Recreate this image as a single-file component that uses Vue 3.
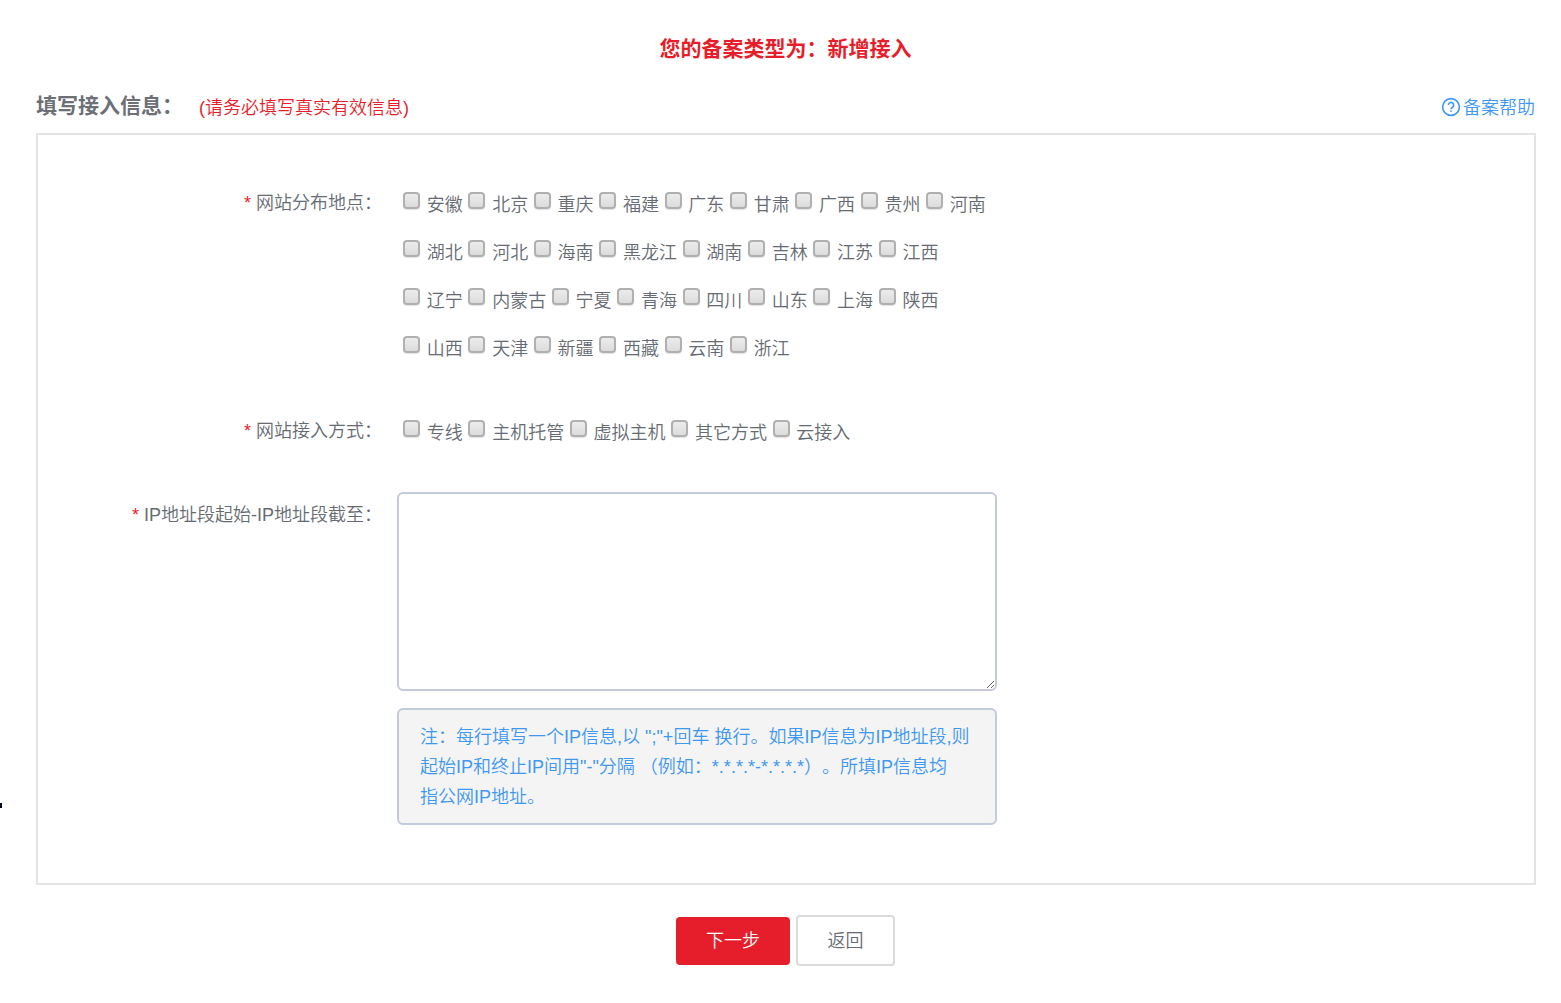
<script setup>
import { ref } from 'vue'

const provinces = [
  '安徽', '北京', '重庆', '福建', '广东', '甘肃', '广西', '贵州', '河南',
  '湖北', '河北', '海南', '黑龙江', '湖南', '吉林', '江苏', '江西',
  '辽宁', '内蒙古', '宁夏', '青海', '四川', '山东', '上海', '陕西',
  '山西', '天津', '新疆', '西藏', '云南', '浙江',
]
const accessModes = ['专线', '主机托管', '虚拟主机', '其它方式', '云接入']

const selectedProvinces = ref([])
const selectedModes = ref([])
const ipRanges = ref('')
</script>

<template>
  <main class="page">
    <span class="edge-mark" aria-hidden="true"></span>
    <h1 class="record-type">您的备案类型为：新增接入</h1>

    <header class="head">
      <h2 class="head-title">填写接入信息：</h2>
      <span class="head-tip">(请务必填写真实有效信息)</span>
      <a class="help" href="#">
        <svg class="help-icon" viewBox="0 0 20 20" aria-hidden="true">
          <circle cx="10" cy="11" r="8.4" />
          <path d="M7.4 9.1a2.6 2.6 0 1 1 4.2 2c-.9.7-1.6 1.1-1.6 2.1" />
          <path d="M10 14.6v1.5" />
        </svg>
        <span>备案帮助</span>
      </a>
    </header>

    <form id="access-form" class="panel" @submit.prevent>
      <div class="field" role="group" aria-labelledby="label-province">
        <div id="label-province" class="field-label"><span class="star">*</span> 网站分布地点：</div>
        <div class="field-body options">
          <template v-for="name in provinces" :key="name">
            <label class="option"><input v-model="selectedProvinces" type="checkbox" :value="name"> {{ name }}</label>{{ ' ' }}
          </template>
        </div>
      </div>

      <div class="field" role="group" aria-labelledby="label-mode">
        <div id="label-mode" class="field-label"><span class="star">*</span> 网站接入方式：</div>
        <div class="field-body options">
          <template v-for="name in accessModes" :key="name">
            <label class="option"><input v-model="selectedModes" type="checkbox" :value="name"> {{ name }}</label>{{ ' ' }}
          </template>
        </div>
      </div>

      <div class="field">
        <label class="field-label" for="ip-ranges"><span class="star">*</span> IP地址段起始-IP地址段截至：</label>
        <div class="field-body">
          <textarea id="ip-ranges" v-model="ipRanges" class="ip-input"></textarea>
          <p class="note">注：每行填写一个IP信息,以 ";"+回车 换行。如果IP信息为IP地址段,则起始IP和终止IP间用"-"分隔 （例如：*.*.*.*-*.*.*.*）。所填IP信息均<span class="keep">指公网IP地址。</span></p>
        </div>
      </div>
    </form>

    <div class="actions">
      <button class="btn btn-primary" type="submit" form="access-form">下一步</button>
      <button class="btn btn-plain" type="button">返回</button>
    </div>
  </main>
</template>

<style>
body {
  background: #fff;
}
</style>

<style scoped>
.page {
  position: relative;
  padding: 32px 26px 36px 36px;
  color: #666b73;
  font-family: "Liberation Sans", "Noto Sans CJK SC", sans-serif;
  font-size: 18px;
  font-weight: 350;
  text-spacing-trim: space-all;
}

.edge-mark {
  position: absolute;
  top: 803px;
  left: 0;
  width: 2px;
  height: 5px;
  background: #020a18;
}

.record-type,
.head-title {
  margin: 0;
  font-size: 21px;
  font-weight: 700;
  line-height: 34px;
}

.record-type {
  color: #e61e2b;
  text-align: center;
}

.head {
  display: flex;
  align-items: center;
  margin: 23px 0 10px;
}

.head-title {
  color: #6b7077;
}

.head-tip {
  margin-left: 16px;
  color: #e61e2b;
}

.help {
  display: flex;
  align-items: center;
  gap: 2px;
  margin-left: auto;
  color: #3f98f0;
  text-decoration: none;
}

.help-icon {
  width: 20px;
  height: 20px;
  overflow: visible;
  fill: none;
  stroke: currentColor;
  stroke-width: 1.6;
}

.panel {
  display: flex;
  flex-direction: column;
  gap: 36px;
  margin-right: -1px;
  padding: 45px 0 58px;
  border: 2px solid #e4e4e4;
}

.field {
  display: flex;
  gap: 15px;
}

.field-label {
  flex: 0 0 23%;
  line-height: 46px;
  text-align: right;
  white-space: nowrap;
}

.star {
  color: #e61e2b;
}

.field-body {
  box-sizing: border-box;
  flex: 0 1 600px;
  min-width: 0;
  line-height: 48px;
}

.options {
  padding-left: 5px;
  font-family: "Noto Sans", "Noto Sans CJK SC", sans-serif;
}

.option {
  display: inline-block;
  height: 48px;
  vertical-align: top;
  white-space: nowrap;
}

.option input {
  box-sizing: border-box;
  width: 17px;
  height: 17px;
  margin: 0 2px 0 1px;
  appearance: none;
  vertical-align: 2px;
  border: 2px solid #b0b0b0;
  border-radius: 4px;
  background: linear-gradient(#ececec, #dcdcdc);
  box-shadow: 0 1px 1px #e2e2e2;
}

.option input:checked {
  background: #479ef0;
}

.ip-input {
  display: block;
  box-sizing: border-box;
  width: 100%;
  height: 199px;
  margin: 0 0 17px;
  padding: 10px 22px;
  border: 2px solid #c2cadb;
  border-radius: 6px;
  background: #fff;
  color: inherit;
  font: inherit;
  line-height: 30px;
  resize: both;
}

.note {
  margin: 0;
  padding: 12px 21px 11px;
  border: 2px solid #c2cadb;
  border-radius: 6px;
  background: #f4f4f4;
  color: #3f98f0;
  line-height: 30px;
}

.keep {
  white-space: nowrap;
}

.actions {
  display: flex;
  align-items: center;
  justify-content: center;
  gap: 6px;
  margin-top: 30px;
}

.btn {
  box-sizing: border-box;
  border-radius: 4px;
  font: inherit;
  line-height: 24px;
  cursor: pointer;
}

.btn-primary {
  padding: 12px 30px;
  border: 0;
  background: #e61e2b;
  color: #fff;
}

.btn-plain {
  width: 99px;
  height: 51px;
  padding: 10px 0;
  border: 2px solid #dadada;
  background: #fff;
  color: inherit;
}
</style>
